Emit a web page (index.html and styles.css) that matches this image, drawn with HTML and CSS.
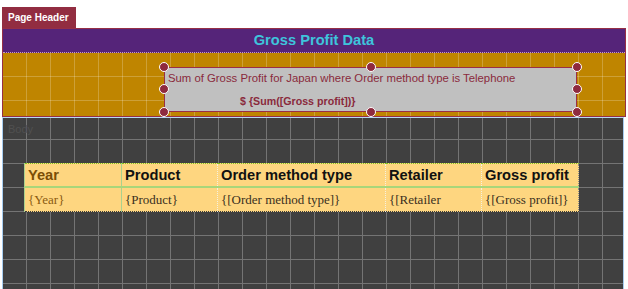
FILE: index.html
```html
<!DOCTYPE html>
<html lang="en">
<head>
    <meta charset="UTF-8">
    <meta name="viewport" content="width=device-width, initial-scale=1.0">
    <title>Gross Profit Data</title>
    <link rel="stylesheet" href="styles.css">
</head>
<body>
    <div class="canvas">
        <!-- Page Header section -->
        <div class="tab">Page Header</div>
        <div class="page-header">
            <div class="title-band">
                <h1>Gross Profit Data</h1>
            </div>
            <div class="summary-band">
                <div class="textbox">
                    <p class="caption">Sum of Gross Profit for Japan where Order method type is Telephone</p>
                    <p class="value">$ {Sum([Gross profit])}</p>
                    <span class="handle top-left"></span>
                    <span class="handle top-mid"></span>
                    <span class="handle top-right"></span>
                    <span class="handle mid-left"></span>
                    <span class="handle mid-right"></span>
                    <span class="handle bottom-left"></span>
                    <span class="handle bottom-mid"></span>
                    <span class="handle bottom-right"></span>
                </div>
            </div>
        </div>

        <!-- Body section -->
        <div class="body-section">
            <span class="section-label">Body</span>
            <table class="list">
                <colgroup>
                    <col class="col-year">
                    <col class="col-product">
                    <col class="col-method">
                    <col class="col-retailer">
                    <col class="col-profit">
                </colgroup>
                <thead>
                    <tr>
                        <th class="year">Year</th>
                        <th class="product">Product</th>
                        <th>Order method type</th>
                        <th>Retailer</th>
                        <th>Gross profit</th>
                    </tr>
                </thead>
                <tbody>
                    <tr>
                        <td class="year">{Year}</td>
                        <td class="product">{Product}</td>
                        <td>{[Order method type]}</td>
                        <td>{[Retailer</td>
                        <td>{[Gross profit]}</td>
                    </tr>
                </tbody>
            </table>
        </div>
    </div>
</body>
</html>
```

FILE: styles.css
```css
body {
    margin: 0;
    padding: 0;
    background-color: #ffffff;
    font-family: "Liberation Sans", Arial, sans-serif;
    overflow: hidden;
}

.canvas {
    padding: 7px 0 0 2px;
}

/* Section tab */
.tab {
    display: inline-block;
    height: 21px;
    padding: 0 7px 0 6px;
    background-color: #922d41;
    color: #ffffff;
    font-size: 10px;
    font-weight: bold;
    line-height: 22px;
}

/* Page Header */
.page-header {
    box-sizing: border-box;
    width: 624px;
    border: 1px solid #962f46;
}

.title-band {
    height: 23px;
    background-color: #552479;
    border-bottom: 1px dotted #c99ac0;
}

.title-band h1 {
    margin: 0;
    text-align: center;
    color: #3ec4dc;
    font-size: 11pt;
    font-weight: bold;
    line-height: 22px;
}

.summary-band {
    height: 49px;
    padding: 14px 0 0 161px;
    background-color: #bf8500;
    background-image:
        linear-gradient(to right, transparent 23px, rgba(255, 255, 255, 0.22) 23px),
        linear-gradient(to bottom, transparent 23px, rgba(255, 255, 255, 0.22) 23px);
    background-size: 24px 24px;
}

.textbox {
    position: relative;
    box-sizing: border-box;
    width: 413px;
    height: 45px;
    padding: 2px 0 0 3px;
    background-color: #c0c0c0;
    border: 1px solid #9b2f45;
    color: #8a2a3c;
}

.caption {
    margin: 0;
    font-size: 8.5pt;
    line-height: 16px;
}

.value {
    margin: 7px 0 0 72px;
    font-size: 8pt;
    font-weight: bold;
    line-height: 16px;
}

.handle {
    position: absolute;
    box-sizing: border-box;
    width: 10px;
    height: 10px;
    border: 1.5px solid #ffffff;
    border-radius: 50%;
    background-color: #8e2a3e;
}

.top-left { left: -6px; top: -6px; }
.top-mid { left: 201px; top: -6px; }
.top-right { right: -6px; top: -6px; }
.mid-left { left: -6px; top: 16px; }
.mid-right { right: -6px; top: 16px; }
.bottom-left { left: -6px; bottom: -6px; }
.bottom-mid { left: 201px; bottom: -6px; }
.bottom-right { right: -6px; bottom: -6px; }

/* Body */
.body-section {
    box-sizing: border-box;
    width: 622px;
    height: 172px;
    padding-top: 2px;
    border-top: 1px solid #b8d8f4;
    border-left: 1px solid #a7cdf0;
    border-right: 1px solid #a7cdf0;
    background-color: #404040;
    background-image:
        linear-gradient(to right, transparent 23px, #747474 23px),
        linear-gradient(to bottom, transparent 23px, #747474 23px);
    background-size: 24px 24px;
    background-position: 0 -2px;
}

.section-label {
    display: block;
    padding-left: 5px;
    color: #505050;
    font-size: 11px;
    line-height: 18px;
}

/* List table */
.list {
    margin: 25px 0 0 21px;
    width: 554px;
    border-collapse: collapse;
    table-layout: fixed;
    background-color: #fed680;
    border-right: 1px dotted #8a8a8a;
    border-bottom: 1px dotted #3a3a3a;
}

.col-year { width: 97px; }
.col-product { width: 96px; }
.col-method { width: 168px; }
.col-retailer { width: 96px; }
.col-profit { width: 97px; }

.list th,
.list td {
    height: 22px;
    padding: 0 0 0 3px;
    text-align: left;
    white-space: nowrap;
    overflow: hidden;
    border-left: 1px dotted #f4f0e0;
}

.list th {
    border-top: 1px dotted #7dc21e;
    border-bottom: 2px solid #a8d67a;
    color: #111111;
    font-size: 11pt;
    font-weight: bold;
}

.list td {
    height: 23px;
    color: #3a3020;
    font-family: "Liberation Serif", "Times New Roman", serif;
    font-size: 13px;
}

.list .year {
    color: #7b4e06;
    border-left: 1px solid #a9d18e;
}

.list td.year {
    color: #8a5a10;
}

.list .product {
    border-left: 1px solid #a9d18e;
}
```
